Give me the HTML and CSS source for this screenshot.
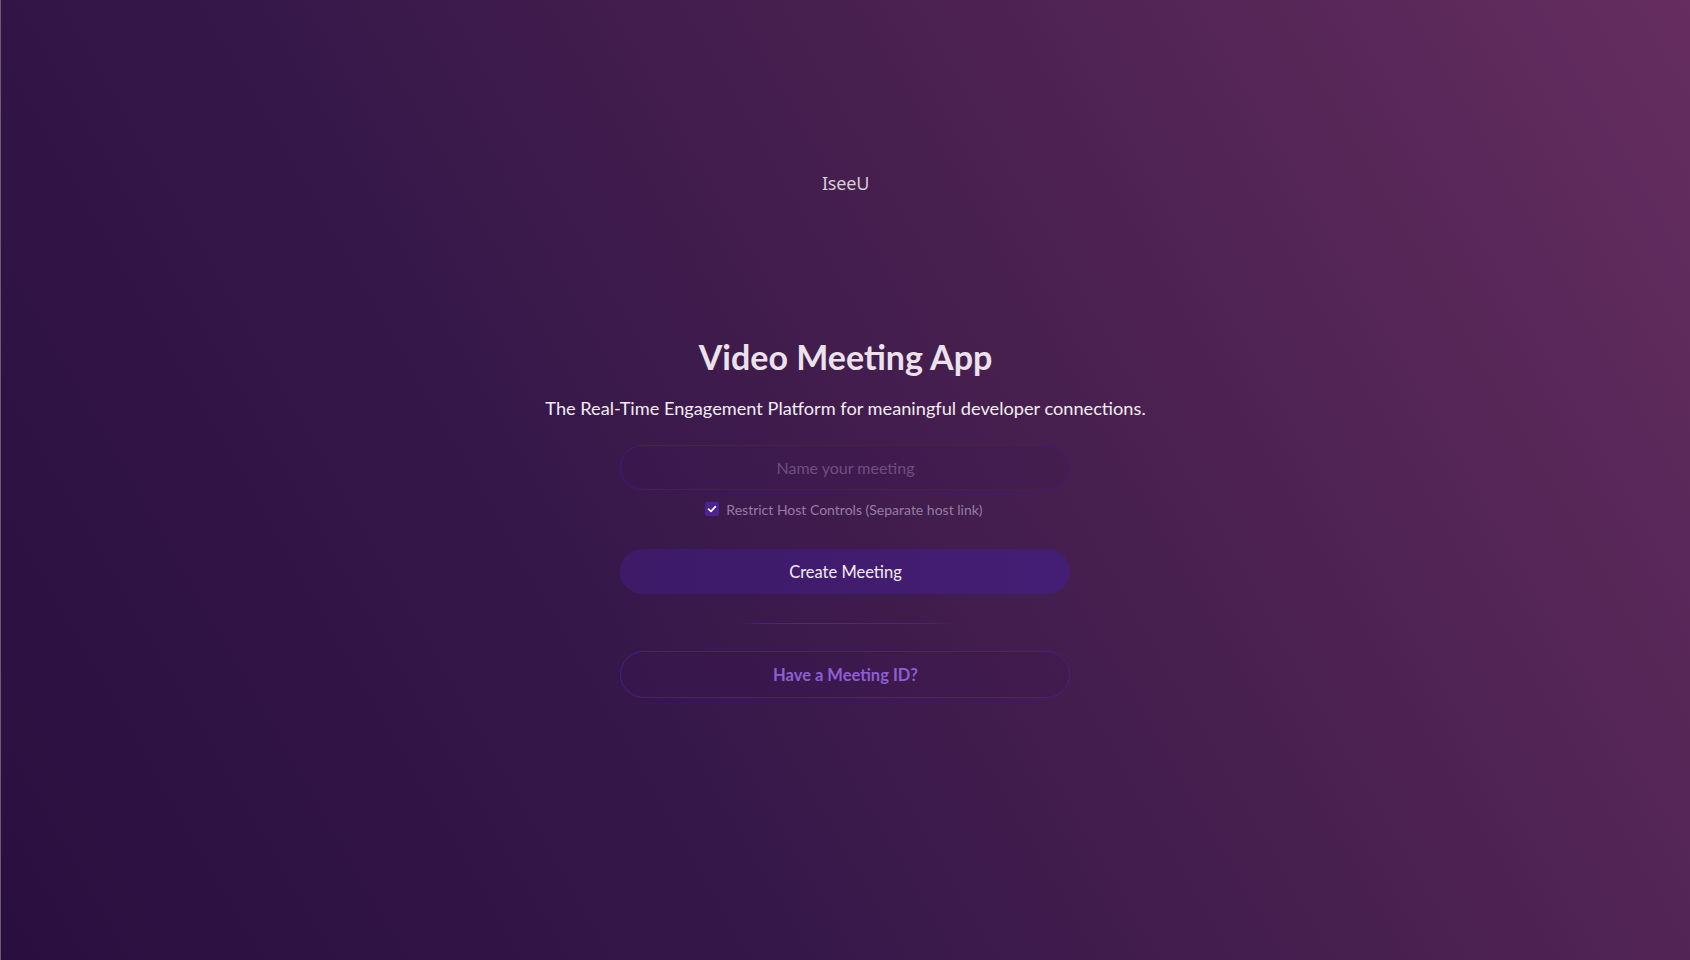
FILE: index.html
```html
<!DOCTYPE html>
<html lang="en">
<head>
<meta charset="utf-8">
<title>IseeU</title>
<link rel="stylesheet" href="styles.css">
</head>
<body>
<div class="page">
  <header class="header">
    <div class="logo">IseeU</div>
  </header>
  <main class="main">
    <h1 class="title">Video Meeting App</h1>
    <p class="subtitle">The Real-Time Engagement Platform for meaningful developer connections.</p>
    <form class="form" onsubmit="return false">
      <input class="name-input" type="text" placeholder="Name your meeting">
      <label class="check-row">
        <span class="check-box">
          <svg width="10" height="10" viewBox="0 0 10 10"><path d="M1.6 5.2 L4 7.4 L8.4 2.6" fill="none" stroke="#fff" stroke-width="1.7" stroke-linecap="round" stroke-linejoin="round"/></svg>
        </span>
        <span class="check-label">Restrict Host Controls (Separate host link)</span>
      </label>
      <button class="btn-primary" type="button">Create Meeting</button>
      <div class="divider"></div>
      <button class="btn-outline" type="button">Have a Meeting ID?</button>
    </form>
  </main>
</div>
</body>
</html>
```

FILE: styles.css
```css
* { box-sizing: border-box; }
html, body { margin: 0; padding: 0; height: 100%; }
body {
  font-family: Lato, "Noto Sans", sans-serif;
  color: #f1e8f1;
  background: linear-gradient(60deg, #290f3f 0%, #36174a 35%, #48204f 62%, #652d60 100%);
  overflow: hidden;
}
.page {
  height: 960px;
  border-left: 1px solid #6c5a74;
  display: flex;
  flex-direction: column;
  align-items: center;
}
.header {
  padding-top: 171px;
  height: 337px;
}
.logo {
  font-family: "Noto Sans", sans-serif;
  font-size: 18px;
  line-height: 24px;
  color: #d9cbd8;
  letter-spacing: -0.2px;
}
.main {
  display: flex;
  flex-direction: column;
  align-items: center;
}
.title {
  margin: 0;
  font-size: 34px;
  line-height: 40px;
  font-weight: 700;
  color: #ece2ec;
}
.subtitle {
  margin: 18px 0 0;
  font-size: 18.2px;
  line-height: 26px;
  color: #f3ecf3;
}
.form {
  margin-top: 24px;
  width: 450px;
  display: flex;
  flex-direction: column;
  align-items: center;
}
.name-input {
  width: 100%;
  height: 45px;
  border-radius: 23px;
  border: 1px solid #44197a;
  background: rgba(60, 20, 90, 0.18);
  text-align: center;
  font-family: Lato, "Noto Sans", sans-serif;
  font-size: 16px;
  color: #e6dbe6;
  outline: none;
}
.name-input::placeholder { color: #6f4e83; }
.check-row {
  margin-top: 9px;
  display: flex;
  align-items: center;
  gap: 7px;
  height: 20px;
  margin-right: 3px;
}
.check-box {
  width: 14px;
  height: 14px;
  border-radius: 2px;
  background: #4b2394;
  display: flex;
  align-items: center;
  justify-content: center;
}
.check-label {
  font-size: 14px;
  color: #977ca4;
}
.btn-primary {
  margin-top: 30px;
  width: 100%;
  height: 45px;
  border: none;
  border-radius: 23px;
  background: linear-gradient(90deg, #3e1a69, #441e74);
  color: #f4ecf4;
  font-family: Lato, "Noto Sans", sans-serif;
  font-size: 16.5px;
  cursor: pointer;
}
.divider {
  margin-top: 29px;
  width: 220px;
  height: 1px;
  background: linear-gradient(90deg, rgba(84,36,150,0), rgba(84,36,150,0.9) 20%, rgba(84,36,150,0.9) 80%, rgba(84,36,150,0));
}
.btn-outline {
  margin-top: 27px;
  width: 100%;
  height: 47px;
  border-radius: 24px;
  border: 1px solid #4a1f82;
  background: rgba(60, 20, 90, 0.12);
  color: #8d5fd2;
  font-family: Lato, "Noto Sans", sans-serif;
  font-size: 16.5px;
  font-weight: 700;
  cursor: pointer;
}
```
